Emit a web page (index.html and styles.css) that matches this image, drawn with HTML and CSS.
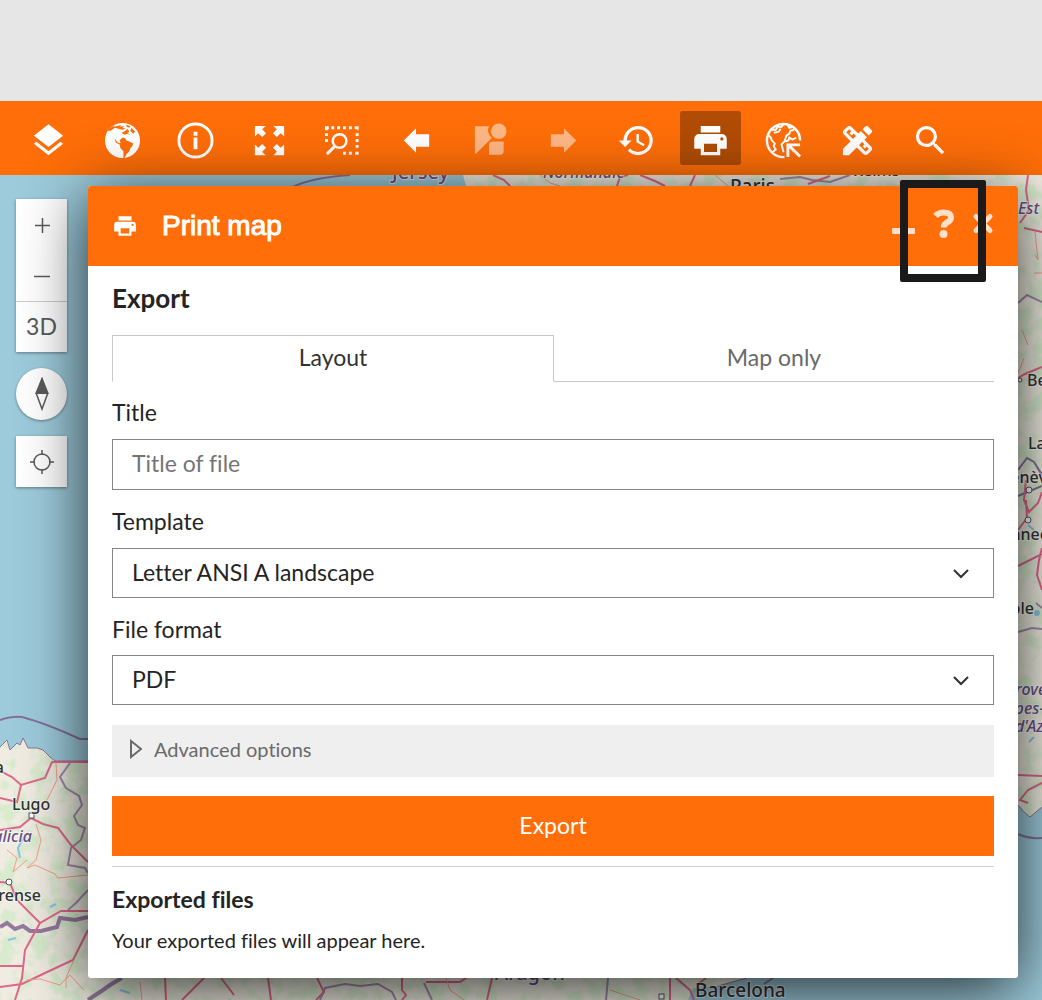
FILE: index.html
```
<!DOCTYPE html>
<html lang="en">
<head>
    <meta charset="UTF-8">
    <meta name="viewport" content="width=device-width, initial-scale=1.0">
    <title>Print map</title>
    <link rel="stylesheet" href="styles.css">
</head>
<body>

    <!-- Empty banner above the app -->
    <div class="banner"></div>

    <!-- Main toolbar -->
    <header class="toolbar">
        <nav class="tools" aria-label="Map tools">
            <button class="tool" aria-label="Layers">
                <svg class="icon" viewBox="0 0 24 24"><path d="M12,16L19.36,10.27L21,9L12,2L3,9L4.63,10.27M12,18.54L4.62,12.81L3,14.07L12,21.07L21,14.07L19.37,12.8L12,18.54Z"/></svg>
            </button>
            <button class="tool" aria-label="Basemap">
                <svg class="icon" viewBox="0 0 40 40">
                    <circle cx="20" cy="20" r="18"/>
                    <path class="cut" d="M6 8L12 4L11 6L19 4L17 6L22 5L20 7L23 8L20 9L16 8L12 7L8 10L5 10ZM24 4L28 5L27 7L24 6ZM19 12L23 10L25 8L27 11L25 12L28 14L25 13L22 14ZM29 7L33 11L31 13L28 10ZM17 20L20 17L23 18L24 20L27 21L31 23L30 26L28 28L27 31L24 34L22 38L21 38L21 31L18 28L17 24L18 22ZM12 18L15 22L18 23L17 24L13 22Z"/>
                </svg>
            </button>
            <button class="tool" aria-label="Information">
                <svg class="icon" viewBox="0 0 40 40">
                    <circle class="line" cx="20" cy="20" r="17"/>
                    <path d="M18 11h4v4h-4zM18 17h4v12h-4z"/>
                </svg>
            </button>
            <button class="tool" aria-label="Full extent">
                <svg class="icon" viewBox="0 0 40 40"><path d="M5 5h11l-3.500 3.500 4 4-4 4-4-4L5 16zM35 5v11l-3.500-3.500-4 4-4-4 4-4L24 5zM5 35V24l3.500 3.500 4-4 4 4-4 4L16 35zM35 35H24l3.500-3.500-4-4 4-4 4 4L35 24z"/></svg>
            </button>
            <button class="tool" aria-label="Zoom to selection">
                <svg class="icon" viewBox="0 0 40 40">
                    <path d="M2 5.500h4v3H5v1H2zM8.500 5.500h3v3h-3zM14.500 5.500h3v3h-3zM20.500 5.500h3v3h-3zM26.500 5.500h3v3h-3zM32.500 5.500h4v4h-1v-1h-3zM2 12.500h3v3H2zM2 18.500h3v3H2zM33.500 12.500h3v3h-3zM33.500 18.500h3v3h-3zM33.500 24.500h3v3h-3zM20.500 31.500h3v3h-3zM26.500 31.500h3v3h-3zM33 31.500h3.500v3H33z"/>
                    <circle class="line thin" cx="17" cy="20.500" r="7"/>
                    <path class="line" d="M12 26L4 34"/>
                </svg>
            </button>
            <button class="tool" aria-label="Previous extent">
                <svg class="icon" viewBox="0 0 40 40"><path d="M7 20L19.500 7.500V13.500H33V26.500H19.500V32.500Z"/></svg>
            </button>
            <button class="tool" aria-label="Street view" disabled>
                <svg class="icon" viewBox="0 0 40 40">
                    <path d="M6 5.500H19.500Q18 8 18.500 11Q19.500 15 22.500 17.500L6 33.500Q5 33.500 5 32.500V7Q5 5.500 6 5.500Z"/>
                    <circle cx="29.500" cy="10.500" r="8"/>
                    <path d="M19.500 25Q19.500 21 23 21H34.500V31Q34.500 34.500 31 34.500H19.500Z"/>
                </svg>
            </button>
            <button class="tool" aria-label="Next extent" disabled>
                <svg class="icon" viewBox="0 0 40 40"><path d="M33 20L20.500 7.500V13.500H7V26.500H20.500V32.500Z"/></svg>
            </button>
            <button class="tool" aria-label="History">
                <svg class="icon" viewBox="0 0 24 24"><path d="M13.500,8H12V13L16.280,15.540L17,14.330L13.500,12.250V8M13,3A9,9 0 0,0 4,12H1L4.960,16.030L9,12H6A7,7 0 0,1 13,5A7,7 0 0,1 20,12A7,7 0 0,1 13,19C11.070,19 9.320,18.210 8.060,16.940L6.640,18.360C8.270,20 10.500,21 13,21A9,9 0 0,0 22,12A9,9 0 0,0 13,3"/></svg>
            </button>
            <button class="tool active" aria-label="Print">
                <svg class="icon" viewBox="0 0 24 24"><path d="M18,3H6V7H18M19,12A1,1 0 0,1 18,11A1,1 0 0,1 19,10A1,1 0 0,1 20,11A1,1 0 0,1 19,12M16,19H8V14H16M19,8H5A3,3 0 0,0 2,11V17H6V21H18V17H22V11A3,3 0 0,0 19,8Z"/></svg>
            </button>
            <button class="tool" aria-label="Coordinates">
                <svg class="icon" viewBox="0 0 40 40">
                    <path class="line thin" d="M21 37A17 17 0 1 1 37 20"/>
                    <path class="line hair" d="M4 14L7 17L8 20L11 23L10 26L12 29L9 32M8 9L12 9L14 6L18 6L20 3M10 12L15 11L17 8M24 4L26 7L30 6M19 28L18 24L21 21L23 15L26 13L27 10L31 9M22 21L25 20L26 17L29 19L33 17M19 28L20 32"/>
                    <path d="M23 23H37V26H28.500L38 35.500L36 37.500L26 28V37H23Z"/>
                </svg>
            </button>
            <button class="tool" aria-label="Draw and measure">
                <svg class="icon" viewBox="0 0 24 24"><path d="M16.240 11.510l1.570-1.570-3.750-3.750-1.570 1.570-4.140-4.130c-.78-.78-2.050-.78-2.830 0l-1.900 1.900c-.78.78-.78 2.050 0 2.830l4.130 4.130L3 17.250V21h3.750l4.760-4.760 4.130 4.130c.95.950 2.230.6 2.830 0l1.900-1.900c.78-.78.78-2.050 0-2.830l-4.130-4.130zm-7.060-.44L5.040 6.940l1.890-1.900L8.200 6.310 7.020 7.500l1.410 1.410 1.190-1.190 1.450 1.450-1.890 1.900zm7.880 7.890l-4.130-4.130 1.900-1.900 1.450 1.450-1.190 1.190 1.410 1.410 1.190-1.190 1.270 1.270-1.900 1.900zM20.710 7.040c.39-.39.39-1.020 0-1.410l-2.340-2.340c-.47-.47-1.120-.29-1.410 0l-1.830 1.830 3.750 3.750 1.830-1.830z"/></svg>
            </button>
            <button class="tool" aria-label="Search">
                <svg class="icon" viewBox="0 0 24 24"><path d="M15.500 14h-.79l-.28-.27A6.471 6.471 0 0016 9.500 6.500 6.500 0 109.500 16c1.610 0 3.090-.59 4.230-1.570l.27.280v.79l5 4.990L20.490 19l-4.990-5zm-6 0C7.010 14 5 11.990 5 9.500S7.010 5 9.500 5 14 7.010 14 9.500 11.990 14 9.500 14z"/></svg>
            </button>
        </nav>
    </header>

    <main class="stage">

        <!-- Map background -->
        <svg class="map" viewBox="0 175 1042 825" preserveAspectRatio="xMinYMin slice" aria-hidden="true">
            <defs>
                <!-- green woodland blotches -->
                <filter id="woods" x="0" y="0" width="100%" height="100%">
                    <feTurbulence type="fractalNoise" baseFrequency="0.06" numOctaves="4" seed="7"/>
                    <feColorMatrix values="0 0 0 0 0.69  0 0 0 0 0.83  0 0 0 0 0.62  0 5 0 0 -2.2"/>
                </filter>
                <clipPath id="land">
                    <path d="M0 747L7 740L10 750L17 743L20 745L23 738L28 748L37 748L43 750L50 757L55 761L88 761H760L747 978L718 986L693 988L688 1000H0Z"/>
                    <path d="M463 175L466 186V230H950V805H1018L1024 812L1030 817L1042 807V175Z"/>
                </clipPath>
            </defs>
            <rect class="sea" x="0" y="175" width="1042" height="825"/>
            <g clip-path="url(#land)">
                <rect class="ground" x="0" y="175" width="1042" height="825"/>
                <rect x="0" y="175" width="1042" height="825" filter="url(#woods)"/>
            </g>
            <path class="coast" d="M0 747L7 740L10 750L17 743L20 745L23 738L28 748L37 748L43 750L50 757L55 761L88 761M1018 805L1024 812L1030 817L1042 807M747 978L718 986"/>

            <g class="border">
                <path d="M0 720Q12 716 22 717Q45 723 80 739H88"/>
                <path d="M293 187Q310 178 350 175"/>
                <path d="M1018 834Q1028 839 1042 838"/>
                <path d="M764 984L776 976"/>
                <path d="M1042 475L1034 462L1027 458L1018 470M1042 486L1018 496"/>
            </g>
            <g class="border bold">
                <path d="M0 927L7 923L15 929L23 926L30 931L41 931L57 927L60 918L75 920L88 917"/>
                <path d="M88 1000L103 990L110 985L122 978"/>
            </g>
            <g class="border faint">
                <path d="M70 763L60 777L66 788L79 796L82 805L74 816L78 825L85 828L81 840L71 848L68 865L85 868L88 873M68 910L76 903L88 890"/>
                <path d="M320 1000L325 988L345 984L360 986L378 984L392 992L396 1000M424 983L432 1000M606 1000L608 978"/>
                <path d="M780 179L800 177L812 180L830 182L850 175M1018 303L1027 295L1042 302"/>
                <path d="M1018 632L1032 628L1042 629M1036 603L1042 608"/>
            </g>

            <g class="road">
                <path d="M0 771L12 777L21 785L45 778L52 762L88 762M21 785L17 802L0 798M0 830L20 827L31 818L43 824L58 828L71 845L88 862"/>
                <path d="M0 882L10 883L17 900L40 923L61 911L88 911M40 923L25 950L22 978L15 1000M0 966L23 966M0 987L22 984L45 973L73 960L88 930"/>
                <path d="M165 978L166 1000M182 1000L204 978M221 978L234 995M268 978L271 1000M317 978L324 992L316 1000M402 978L402 990L406 995L402 1000M426 982L460 982L475 972M492 978L487 1000"/>
                <path d="M670 978V1000M676 978L683 984L690 990L694 1000M706 978L698 984"/>
                <path d="M493 175L504 180L510 186M617 186L620 177L628 175M640 175L655 181L665 186M695 175L690 186M808 184L830 176"/>
                <path d="M1028 175L1026 190L1029 210L1020 223M1024 228L1042 232M1018 378L1025 374L1042 367M1018 566L1030 560L1042 554M1042 548L1039 560L1037 575L1042 590"/>
                <path d="M1026 480L1024 500L1029 512L1038 503L1042 492M1026 500L1027 518L1018 530M1018 775L1042 776M1042 783L1028 790L1020 800L1028 803"/>
            </g>
            <g class="road minor">
                <path d="M56 763L57 780L47 800L35 812M36 824L41 840L36 860L27 868L35 865L55 874L58 878L88 875M7 850L17 858L13 872L27 860"/>
                <path d="M27 980L40 979L60 985L70 975L84 990M74 960L66 978L66 988M140 982L142 1000M446 978L450 990L464 1000M610 990L640 1000"/>
                <path d="M540 175L550 183L560 186M715 175L728 186M1035 232L1038 260L1035 255M1034 273L1042 273M1022 330L1028 345M1024 358L1018 373"/>
            </g>
            <g class="water">
                <path d="M24 837L18 848L20 858M8 940L16 938M50 907L56 904M120 990L130 993M1028 525L1034 530M1029 742L1034 737"/>
                <circle cx="1037" cy="613" r="2"/>
            </g>

            <g class="town">
                <rect x="29" y="813" width="5" height="5"/>
                <circle cx="9" cy="882" r="3"/>
                <circle cx="1020" cy="380" r="2"/>
                <circle cx="1029" cy="490" r="3"/>
                <circle cx="1028" cy="520" r="3"/>
                <rect x="659" y="994" width="5" height="5"/>
            </g>

            <g class="place">
                <text x="12" y="810">Lugo</text>
                <text x="41" y="901" text-anchor="end">Ourense</text>
                <text x="4" y="773" text-anchor="end">Coruña</text>
                <text x="695" y="997" class="city">Barcelona</text>
                <text x="730" y="193" class="city">Paris</text>
                <text x="853" y="176">Reims</text>
                <text x="1027" y="386">Besançon</text>
                <text x="1028" y="449">Lausanne</text>
                <text x="1056" y="483" text-anchor="end">Genève</text>
                <text x="1056" y="540" text-anchor="end">Annecy</text>
                <text x="1034" y="614" text-anchor="end">Grenoble</text>
            </g>
            <g class="region">
                <text x="32" y="842" text-anchor="end">Galicia</text>
                <text x="1018" y="214">Est</text>
                <text x="392" y="179" class="upright">Jersey</text>
                <text x="543" y="178">Normandie</text>
                <text x="495" y="980" class="upright">Aragón</text>
                <text x="1006" y="695">Provence-</text>
                <text x="1001" y="714">Alpes-Côte</text>
                <text x="1015" y="732">d'Azur</text>
            </g>
        </svg>

        <!-- Map controls -->
        <div class="controls">
            <div class="control-group">
                <button class="control" aria-label="Zoom in">
                    <svg viewBox="0 0 16 16"><path d="M8.500 1V16M1 8.500H16"/></svg>
                </button>
                <button class="control" aria-label="Zoom out">
                    <svg viewBox="0 0 16 16"><path d="M0 8.500H16"/></svg>
                </button>
                <button class="control view-mode">3D</button>
            </div>
            <button class="control compass" aria-label="Reset north">
                <svg viewBox="0 0 14 34"><path d="M1.500 17L7 2L12.500 17L7 32Z"/><path class="solid" d="M0 17L7 0L14 17Z"/></svg>
            </button>
            <button class="control locate" aria-label="My location">
                <svg viewBox="0 0 24 24"><circle cx="12" cy="12" r="8"/><path d="M12 0V5M12 19V24M0 12H5M19 12H24"/></svg>
            </button>
        </div>

        <!-- Print dialog -->
        <section class="dialog" aria-labelledby="dialogTitle">
            <div class="dialog-head">
                <svg class="dialog-icon" viewBox="0 0 24 24"><path d="M18,3H6V7H18M19,12A1,1 0 0,1 18,11A1,1 0 0,1 19,10A1,1 0 0,1 20,11A1,1 0 0,1 19,12M16,19H8V14H16M19,8H5A3,3 0 0,0 2,11V17H6V21H18V17H22V11A3,3 0 0,0 19,8Z"/></svg>
                <h1 id="dialogTitle">Print map</h1>
                <div class="dialog-actions">
                    <button aria-label="Minimize"><svg viewBox="0 0 24 32"><rect x="0" y="20" width="23" height="6" rx="1"/></svg></button>
                    <button aria-label="Help"><svg viewBox="0 0 24 32"><path class="hook" d="M3.500 8Q6.500 4.500 11.500 4.500Q19 4.500 19 9.500Q19 12.500 15 14.500Q11.800 16.200 11.800 19.500"/><circle cx="11.500" cy="26" r="4"/></svg></button>
                    <button aria-label="Close"><svg viewBox="0 0 24 32"><path class="cross" d="M4 8.500L18 22.500M18 8.500L4 22.500"/></svg></button>
                </div>
            </div>

            <form class="dialog-body">
                <h2>Export</h2>
                <div class="tabs" role="tablist">
                    <button type="button" class="tab selected" role="tab" aria-selected="true">Layout</button>
                    <button type="button" class="tab" role="tab" aria-selected="false">Map only</button>
                </div>

                <div class="field">
                    <label for="fileTitle">Title</label>
                    <input type="text" id="fileTitle" placeholder="Title of file">
                </div>
                <div class="field">
                    <label for="template">Template</label>
                    <div class="select">
                        <select id="template">
                            <option>Letter ANSI A landscape</option>
                        </select>
                        <svg viewBox="0 0 16 10"><path d="M1 1L8 8L15 1"/></svg>
                    </div>
                </div>
                <div class="field">
                    <label for="format">File format</label>
                    <div class="select">
                        <select id="format">
                            <option>PDF</option>
                        </select>
                        <svg viewBox="0 0 16 10"><path d="M1 1L8 8L15 1"/></svg>
                    </div>
                </div>

                <button type="button" class="advanced" aria-expanded="false">
                    <svg viewBox="0 0 12 20"><path d="M1 2L11 10L1 18Z"/></svg>
                    Advanced options
                </button>
                <button type="button" class="export">Export</button>

                <div class="exported">
                    <h3>Exported files</h3>
                    <p>Your exported files will appear here.</p>
                </div>
            </form>

            <!-- marks the help button -->
            <div class="callout"></div>
        </section>
    </main>

</body>
</html>
```
FILE: styles.css
```
* {
    box-sizing: border-box;
}

body {
    margin: 0;
    min-height: 100vh;
    display: flex;
    flex-direction: column;
    font-family: Lato, "Liberation Sans", sans-serif;
    font-size: 23px;
    font-variant-ligatures: none;
    color: #242424;
}

button,
input,
select {
    font: inherit;
    font-variant-ligatures: none;
    color: inherit;
    margin: 0;
    border: 0;
    border-radius: 0;
    background: none;
}

h1,
h2,
h3,
p {
    margin: 0;
}

.banner {
    height: 101px;
    background: #e6e6e6;
}

/* Toolbar */
.toolbar {
    background: #ff6e08;
    padding: 10px 18px;
}

.tools {
    display: flex;
    justify-content: space-between;
    max-width: 943px;
}

.tool {
    width: 61px;
    height: 54px;
    padding: 5px 0 0;
    display: flex;
    align-items: center;
    justify-content: center;
    border-radius: 3px;
}

.tool.active {
    background: #b04c05;
}

.tool:disabled .icon {
    opacity: 0.5;
}

.icon {
    width: 39px;
    height: 39px;
    flex: none;
    fill: #fff;
}

.icon .cut {
    fill: #ff6e08;
}

.icon .line {
    fill: none;
    stroke: #fff;
    stroke-width: 3;
}

.icon .thin {
    stroke-width: 2.5;
}

.icon .hair {
    stroke-width: 2;
}

/* Map */
.stage {
    position: relative;
    flex: 1;
    display: flex;
    align-items: flex-start;
    gap: 21px;
    padding: 11px 24px 22px 16px;
}

.map {
    position: absolute;
    top: 0;
    left: 0;
    width: 100%;
    height: 100%;
}

.sea {
    fill: #9dcbdb;
}

.ground {
    fill: #f0ece2;
}

.coast,
.border,
.road,
.water path {
    fill: none;
}

.coast {
    stroke: #8d7399;
    stroke-width: 1;
}

.border {
    stroke: #84719b;
    stroke-width: 2;
}

.border.bold {
    stroke: #957a9f;
    stroke-width: 4;
}

.border.faint {
    stroke: #a38cab;
    stroke-width: 2;
}

.road {
    stroke: #e0688a;
    stroke-width: 2;
}

.road.minor {
    stroke: #f6a184;
    stroke-width: 1;
}

.water {
    fill: #7db8e0;
    stroke: #8cc4e4;
    stroke-width: 2;
}

.town {
    fill: #fff;
    stroke: #555;
    stroke-width: 1;
}

.place,
.region {
    font-family: "Noto Sans", sans-serif;
    font-size: 16px;
    font-weight: 500;
    fill: #333;
    stroke: rgba(255, 255, 255, 0.6);
    stroke-width: 2;
    paint-order: stroke;
}

.region {
    font-style: italic;
    fill: #6a4f82;
}

.region .upright {
    font-style: normal;
    font-size: 20px;
}

.city {
    font-size: 19px;
}

/* Map controls */
.controls {
    position: relative;
    width: 51px;
    flex: none;
    padding-top: 13px;
    display: flex;
    flex-direction: column;
    gap: 16px;
}

.control-group,
.compass,
.locate {
    background: #fff;
    box-shadow: 0 1px 3px rgba(0, 0, 0, 0.4);
}

.control {
    width: 51px;
    height: 51px;
    padding: 0;
    display: flex;
    align-items: center;
    justify-content: center;
    color: #5a5a5a;
}

.control svg {
    width: 16px;
    height: 16px;
    fill: none;
    stroke: #5a5a5a;
    stroke-width: 1.5;
}

.view-mode {
    padding-bottom: 2px;
    border-top: 1px solid #ccc;
}

.compass {
    height: 52px;
    border-radius: 50%;
}

.compass svg {
    width: 14px;
    height: 34px;
}

.compass .solid {
    fill: #5a5a5a;
    stroke: none;
}

.locate svg {
    width: 24px;
    height: 24px;
}

/* Dialog */
.dialog {
    position: relative;
    flex: 1;
    background: #fff;
    border-radius: 3px;
    box-shadow: 0 12px 64px rgba(0, 0, 0, 0.8);
}

.dialog-head {
    height: 80px;
    padding: 0 22px 0 24px;
    display: flex;
    align-items: center;
    background: #ff6e08;
    border-radius: 3px 3px 0 0;
    color: #fff;
}

.dialog-icon {
    width: 26px;
    height: 26px;
    fill: #fff;
}

.dialog-head h1 {
    margin-left: 24px;
    font-family: "Liberation Sans", Arial, sans-serif;
    font-size: 28px;
    font-weight: normal;
    -webkit-text-stroke: 1px #fff;
}

.dialog-actions {
    display: flex;
    gap: 16px;
    margin-left: auto;
}

.dialog-actions button {
    width: 24px;
    height: 36px;
    padding: 0 0 4px;
}

.dialog-actions svg {
    display: block;
    width: 24px;
    height: 32px;
    fill: #ffdfc8;
}

.dialog-actions .hook,
.dialog-actions .cross {
    fill: none;
    stroke: #ffdfc8;
    stroke-width: 6;
}

.dialog-actions .cross {
    stroke-width: 5;
    stroke-linecap: round;
}

.dialog-body {
    padding: 15px 24px 23px;
}

h2 {
    font-size: 26px;
    line-height: 34px;
    margin-bottom: 20px;
}

.tabs {
    display: flex;
    margin-bottom: 15px;
}

.tab {
    flex: 1;
    height: 47px;
    padding: 0 0 3px;
    border-bottom: 1px solid #c8c8c8;
    color: #6a6a6a;
}

.tab.selected {
    border: 1px solid #c8c8c8;
    border-bottom-color: #fff;
    color: #323232;
}

.field {
    margin-bottom: 16px;
}

.field label {
    display: block;
    line-height: 30px;
    margin-bottom: 12px;
}

.field:nth-of-type(4) label {
    margin-bottom: 11px;
}

.field input,
.field select {
    display: block;
    width: 100%;
    height: 50px;
    padding: 0 19px 3px;
    border: 1px solid #858585;
    background: #fff;
}

.field input {
    height: 51px;
}

.field input::placeholder {
    color: #757575;
}

.select {
    position: relative;
}

.select select {
    appearance: none;
}

.select svg {
    position: absolute;
    top: 21px;
    right: 25px;
    width: 16px;
    height: 10px;
    fill: none;
    stroke: #323232;
    stroke-width: 2;
    pointer-events: none;
}

.advanced {
    width: 100%;
    height: 52px;
    margin: 20px 0 19px;
    padding: 0 18px 4px;
    display: flex;
    align-items: center;
    gap: 12px;
    background: #efefef;
    color: #6a6a6a;
    font-size: 20px;
}

.advanced svg {
    width: 12px;
    height: 20px;
    fill: none;
    stroke: #6a6a6a;
    stroke-width: 2;
}

.export {
    display: block;
    width: 100%;
    height: 60px;
    padding-bottom: 3px;
    background: #ff6e08;
    color: #fff;
}

.exported {
    margin-top: 10px;
    padding-top: 17px;
    border-top: 1px solid #d2d2d2;
}

h3 {
    font-size: 23px;
    line-height: 30px;
    margin-bottom: 12px;
}

.exported p {
    font-size: 20px;
    line-height: 28px;
    padding-bottom: 1px;
}

.callout {
    position: absolute;
    top: -6px;
    right: 32px;
    width: 86px;
    height: 102px;
    border: 8px solid #1a1a1a;
    border-radius: 2px;
    pointer-events: none;
}
```
